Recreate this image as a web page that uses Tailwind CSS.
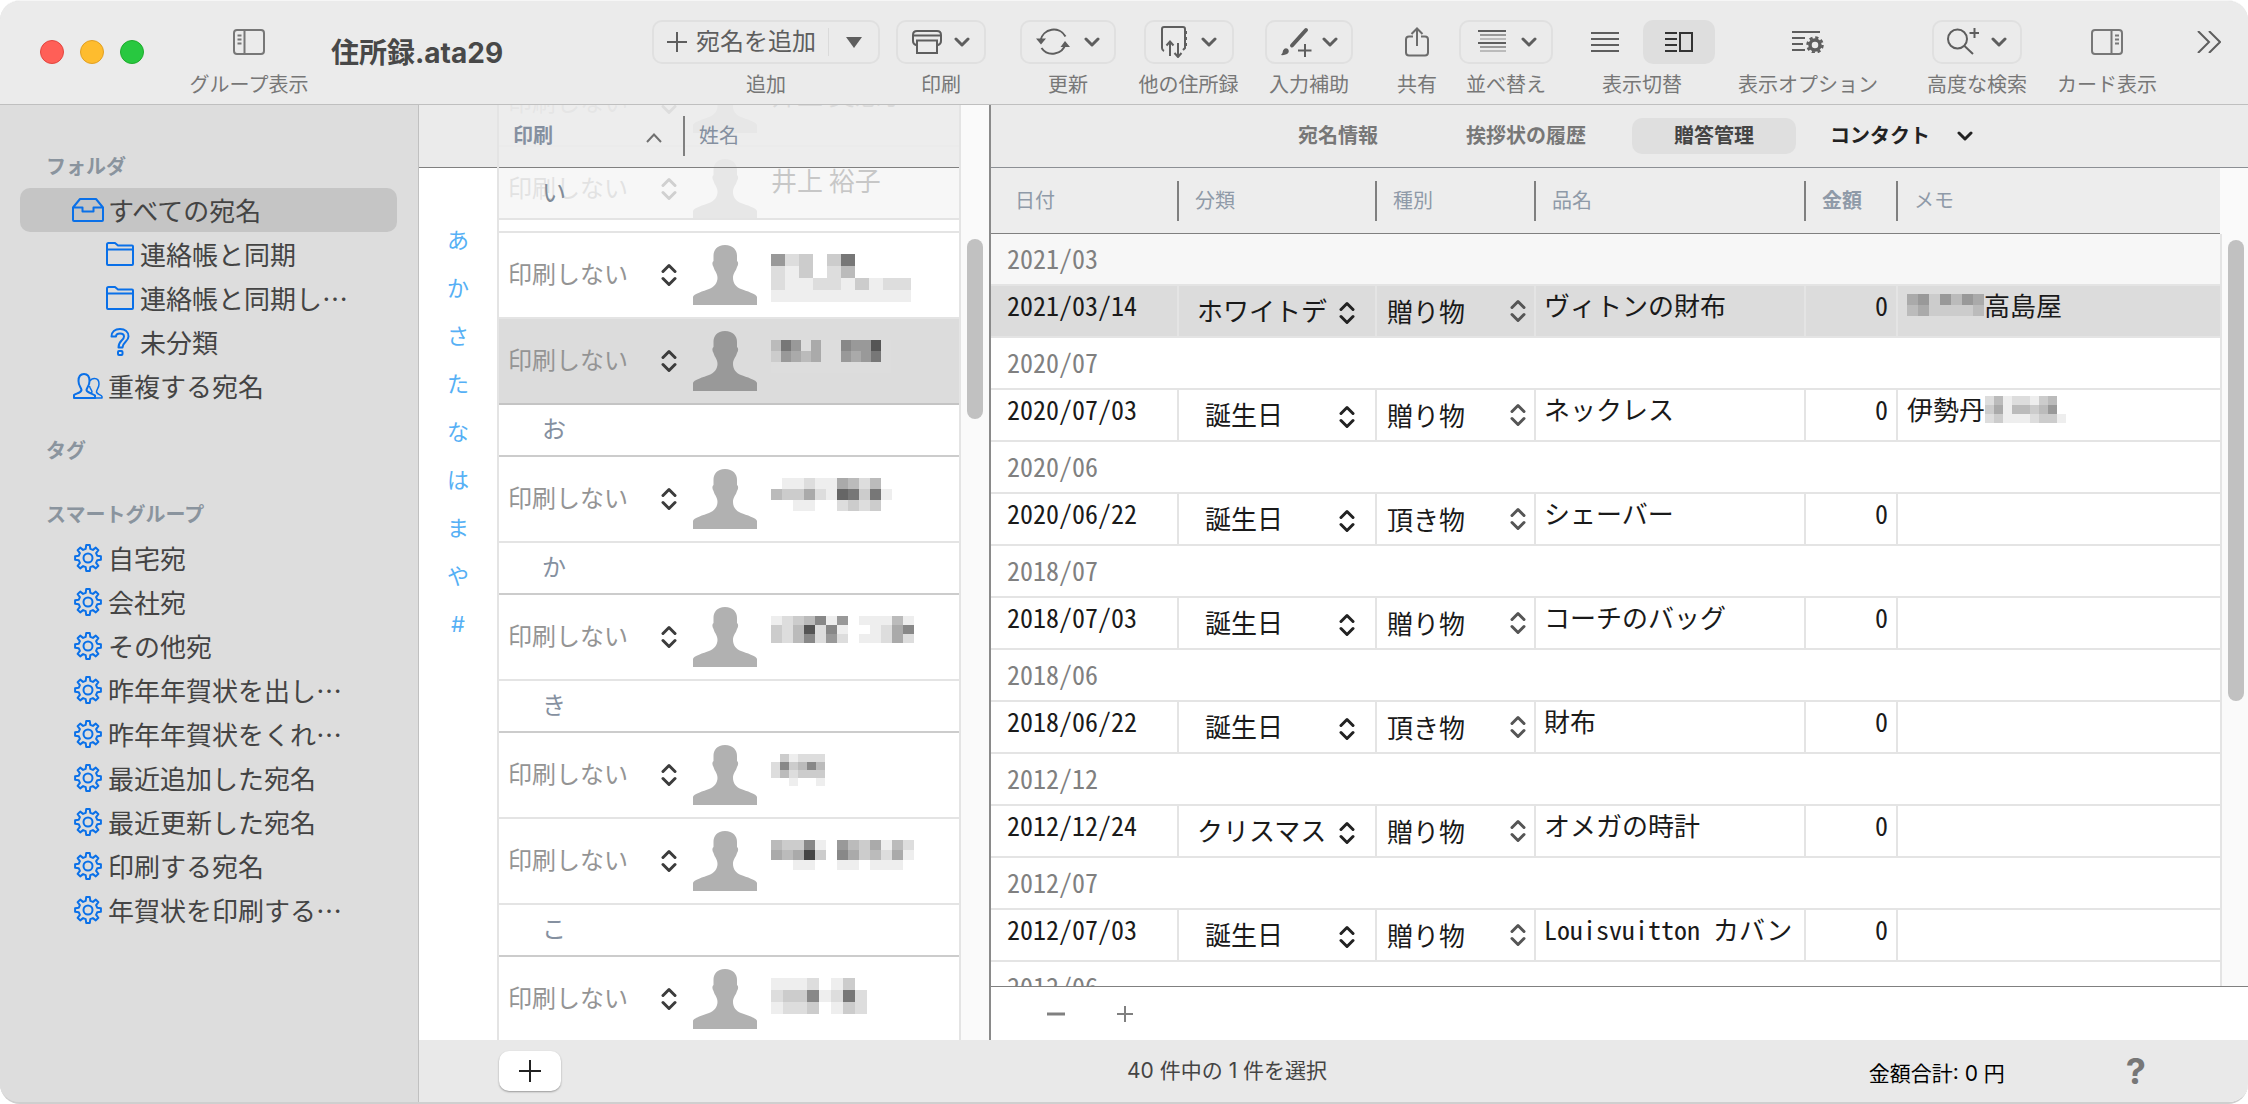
<!DOCTYPE html>
<html lang="ja">
<head>
<meta charset="utf-8">
<title>住所録.ata29</title>
<script src="https://cdn.jsdelivr.net/npm/@tailwindcss/browser@4"></script>
</head>
<body class="bg-white font-['Inter','Noto_Sans_CJK_JP',sans-serif] text-[#444]">
<svg class="hidden" aria-hidden="true">
  <symbol id="chev" viewBox="0 0 16 10"><path d="M2 2l6 6 6-6" fill="none" stroke="currentColor" stroke-width="3" stroke-linecap="round" stroke-linejoin="round"/></symbol>
  <symbol id="updown" viewBox="0 0 16 24"><path d="M2 8.500l6-6 6 6M2 15.500l6 6 6-6" fill="none" stroke="currentColor" stroke-width="3" stroke-linecap="round" stroke-linejoin="round"/></symbol>
  <symbol id="person" viewBox="0 0 64 60"><path fill="currentColor" d="M32 0C24 0 20.500 5 20.500 11V16C19 17 19 19.500 20.500 22C22 27 24.500 28 24.500 33C24.500 38 21 42 16 44C11 46 0 49 0 52V60H64V52C64 49 53 46 48 44C43 42 40 38 40 33C40 28 42.500 27 44 22C45.500 19.500 45.500 17 44 16V11C44 5 40 0 32 0Z"/></symbol>
  <symbol id="gear" viewBox="0 0 28 28"><path id="gearpath" fill="none" stroke="currentColor" stroke-width="2" stroke-linejoin="round"/><circle cx="14" cy="14" r="4.500" fill="none" stroke="currentColor" stroke-width="2"/></symbol>
  <symbol id="folder" viewBox="-2 -2 32 28"><path d="M1 2.500Q1 1 2.500 1H9l3 2.500H26Q27 3.500 27 4.500V22Q27 23 26 23H2Q1 23 1 22ZM1 7.500H27" fill="none" stroke="currentColor" stroke-width="2" stroke-linejoin="round"/></symbol>
  <symbol id="inbox" viewBox="0 0 32 24"><path d="M1 9.500L8 1H24L31 9.500V22Q31 23 30 23H2Q1 23 1 22ZM1 9.500H10.500V13.500H21.500V9.500H31" fill="none" stroke="currentColor" stroke-width="2" stroke-linejoin="round"/></symbol>
  <symbol id="question" viewBox="0 0 20 28"><path d="M1.500 8.500C1.500 4 5 1 10 1C15 1 18.500 4 18.500 8.500C18.500 13.500 12.500 14 12.500 19.500H8.500C8.500 12.500 14 12.500 14 8.500C14 6.500 12.500 5.500 10 5.500C7.500 5.500 6 6.500 6 8.500Z" fill="none" stroke="currentColor" stroke-width="2" stroke-linejoin="round"/><rect x="8" y="23" width="4.500" height="4" rx="1" fill="none" stroke="currentColor" stroke-width="2"/></symbol>
  <symbol id="people" viewBox="0 0 30 28"><path d="M1 26V23C3 21.500 8 21 8.500 18C8 15 5.500 14 5.500 9C5.500 4 8 2 11 2C14 2 16.500 4 16.500 9C16.500 14 14 15 13.500 18C14 21 20 21.500 22 23.500V26Z" fill="none" stroke="currentColor" stroke-width="2" stroke-linejoin="round"/><path d="M17 9C18 7 20 6.500 21.500 6.500C24 6.500 26 8.500 26 12C26 16 23.500 17.500 23.500 20C24 22.500 28 22.500 29 24.500V26H22M16.500 14C17 17 19 18 19 20L17.500 21.500" fill="none" stroke="currentColor" stroke-width="1.500" stroke-linejoin="round"/></symbol>
</svg>

<div class="flex h-screen flex-col overflow-hidden rounded-[20px] border-t border-b-2 border-t-[#f6f6f6] border-b-[#cfcfcf] bg-[#dddddd]">

  <!-- Toolbar -->
  <header class="flex h-[104px] shrink-0 items-start border-b border-[#bfbfbf] bg-[#ebebeb] text-[#5e5e5e]">
    <div class="ml-10 mt-[39px] flex gap-4">
      <button aria-label="閉じる" class="size-6 rounded-full border border-[#e2463f] bg-[#ff5f57]"></button>
      <button aria-label="しまう" class="size-6 rounded-full border border-[#e1a024] bg-[#febc2e]"></button>
      <button aria-label="拡大" class="size-6 rounded-full border border-[#1eac2c] bg-[#28c840]"></button>
    </div>
    <div class="ml-11 mt-[19px] flex w-[122px] flex-col items-center gap-[11px]">
      <button aria-label="グループ表示" class="flex h-11 items-center"><svg class="h-[26px] w-8" viewBox="0 0 32 26" fill="none" stroke="#777" stroke-width="2"><rect x="1" y="1" width="30" height="24" rx="3"/><path d="M11.500 1V25M4.500 6.500H8.500M4.500 10.500H8.500M4.500 14.500H8.500"/></svg></button>
      <span class="text-xl leading-5 text-[#777] whitespace-nowrap">グループ表示</span>
    </div>
    <h1 class="ml-[21px] mt-9 text-[28px] font-bold leading-8 text-[#484848] whitespace-nowrap">住所録.ata29</h1>
    <div class="flex-1"></div>

    <div class="mt-[19px] flex w-[228px] flex-col items-center gap-[11px]">
      <div class="flex h-11 w-full items-center rounded-[10px] border-2 border-[#e0e0e0]">
        <button class="flex h-full items-center text-2xl leading-8 whitespace-nowrap"><svg class="ml-3 mr-2 size-[22px]" viewBox="0 0 22 22" stroke="currentColor" stroke-width="2"><path d="M11 1V21M1 11H21"/></svg>宛名を追加</button>
        <span class="ml-3 h-7 w-px bg-[#dadada]"></span>
        <button aria-label="追加メニュー" class="flex h-full flex-1 items-center justify-center"><svg class="h-[11px] w-4" viewBox="0 0 16 11"><path d="M0 0H16L8 11Z" fill="currentColor"/></svg></button>
      </div>
      <span class="text-xl leading-5 text-[#777]">追加</span>
    </div>
    <div class="ml-4 mt-[19px] flex w-[90px] flex-col items-center gap-[11px]">
      <button aria-label="印刷" class="flex h-11 w-[90px] items-center justify-center gap-3 rounded-[10px] border-2 border-[#e0e0e0]">
        <svg class="h-6 w-[30px]" viewBox="0 0 30 24" fill="none" stroke="currentColor" stroke-width="2"><path d="M5 15H4Q1 14 1 11V5Q1 1 5 1H25Q29 1 29 5V11Q29 14 26 15H25M2 5.500H28"/><rect x="5" y="10.500" width="20" height="12.500"/></svg>
        <svg class="h-[10px] w-4"><use href="#chev"/></svg></button>
      <span class="text-xl leading-5 text-[#777]">印刷</span>
    </div>
    <div class="ml-[34px] mt-[19px] flex w-24 flex-col items-center gap-[11px]">
      <button aria-label="更新" class="flex h-11 w-24 items-center justify-center gap-[14px] rounded-[10px] border-2 border-[#e0e0e0]">
        <svg class="h-[30px] w-[34px]" viewBox="0 0 34 30" fill="none" stroke="currentColor" stroke-width="2"><path d="M29.500 9.500A13.500 13.500 0 0 0 4.500 13.500M5.500 21A13.500 13.500 0 0 0 29.500 17"/><path d="M0 11.500H10L5 17.500ZM24.500 20H34L29 14Z" fill="currentColor" stroke="none"/></svg>
        <svg class="h-[10px] w-4"><use href="#chev"/></svg></button>
      <span class="text-xl leading-5 text-[#777]">更新</span>
    </div>
    <div class="ml-[22px] mt-[19px] flex w-[101px] flex-col items-center gap-[11px]">
      <button aria-label="他の住所録" class="flex h-11 w-[90px] items-center justify-center gap-[14px] rounded-[10px] border-2 border-[#e0e0e0]">
        <svg class="h-8 w-[26px]" viewBox="0 0 26 32" fill="none" stroke="currentColor" stroke-width="2"><path d="M3 25Q1 24 1 22V3Q1 1 3 1H22Q24 1 24 3V22L22 24"/><path d="M25 5V8M25 11V14M25 17V20" stroke-width="3"/><path d="M9 30V16M5.500 19.500L9 15.500L12.500 19.500M17 17V31M13.500 27L17 31L20.500 27"/></svg>
        <svg class="h-[10px] w-4"><use href="#chev"/></svg></button>
      <span class="text-xl leading-5 text-[#777] whitespace-nowrap">他の住所録</span>
    </div>
    <div class="ml-[26px] mt-[19px] flex w-[88px] flex-col items-center gap-[11px]">
      <button aria-label="入力補助" class="flex h-11 w-[88px] items-center justify-center gap-[10px] rounded-[10px] border-2 border-[#e0e0e0]">
        <svg class="h-[30px] w-[31px]" viewBox="0 0 31 30" fill="none" stroke="currentColor"><path d="M11 18.500L25 3" stroke-width="4" stroke-linecap="round"/><path d="M0 28Q2 26 2 23.500Q4 20 7 22Q9 25 6 27Q3 28.500 0 28Z" fill="currentColor" stroke="none"/><path d="M24 17V30M17 23.500H30.500" stroke-width="2"/></svg>
        <svg class="h-[10px] w-4"><use href="#chev"/></svg></button>
      <span class="text-xl leading-5 text-[#777] whitespace-nowrap">入力補助</span>
    </div>
    <div class="ml-11 mt-[19px] flex w-10 flex-col items-center gap-[11px]">
      <button aria-label="共有" class="flex h-11 items-center"><svg class="h-[30px] w-6" viewBox="0 0 24 30" fill="none" stroke="#6c6c6c" stroke-width="2"><path d="M8 9.500H4Q1 9.500 1 12.500V25.500Q1 28.500 4 28.500H20Q23 28.500 23 25.500V12.500Q23 9.500 20 9.500H16M12 19V2M6.500 7L12 1.500L17.500 7"/></svg></button>
      <span class="text-xl leading-5 text-[#777]">共有</span>
    </div>
    <div class="ml-[22px] mt-[19px] flex w-[94px] flex-col items-center gap-[11px]">
      <button aria-label="並べ替え" class="flex h-11 w-[94px] items-center justify-center gap-[15px] rounded-[10px] border-2 border-[#e0e0e0] pl-[2px]">
        <svg class="h-6 w-7" viewBox="0 0 28 24" stroke="#5e5e5e" stroke-width="2"><path d="M0 1H28M0 13H28"/><path d="M2 5H28M2 17H28" stroke="#999"/><path d="M2 9H28M2 21H28" stroke="#bbb"/></svg>
        <svg class="h-[10px] w-4"><use href="#chev"/></svg></button>
      <span class="text-xl leading-5 text-[#777] whitespace-nowrap">並べ替え</span>
    </div>
    <div class="ml-4 mt-[19px] flex w-[146px] flex-col items-center gap-[11px]">
      <div class="flex gap-[2px]">
        <button aria-label="リスト表示" class="flex h-11 w-[72px] items-center justify-center rounded-[10px]"><svg class="h-5 w-7" viewBox="0 0 28 20" stroke="currentColor" stroke-width="2"><path d="M0 1H28M0 7H28M0 13H28M0 19H28"/></svg></button>
        <button aria-label="分割表示" class="flex h-11 w-[72px] items-center justify-center rounded-[10px] bg-[#dedede] text-[#333]"><svg class="h-5 w-7" viewBox="0 0 28 20" fill="none" stroke="currentColor" stroke-width="2"><path d="M0 1H12M0 7H12M0 13H12M0 19H12"/><rect x="15" y="1" width="12" height="18"/></svg></button>
      </div>
      <span class="text-xl leading-5 text-[#777]">表示切替</span>
    </div>
    <div class="ml-[23px] mt-[19px] flex w-[140px] flex-col items-center gap-[11px]">
      <button aria-label="表示オプション" class="flex h-11 items-center"><svg class="h-[22px] w-8" viewBox="0 0 32 22" fill="none" stroke="currentColor" stroke-width="2"><path d="M0 1H28M0 7H13M0 13H11M0 19H13"/><circle cx="23" cy="14" r="5" stroke-width="3.500"/><circle cx="23" cy="14" r="7.500" stroke-width="2.500" stroke-dasharray="3.200 2.690"/></svg></button>
      <span class="text-xl leading-5 text-[#777] whitespace-nowrap">表示オプション</span>
    </div>
    <div class="ml-[49px] mt-[19px] flex w-[100px] flex-col items-center gap-[11px]">
      <button aria-label="高度な検索" class="flex h-11 w-[90px] items-center justify-center gap-3 rounded-[10px] border-2 border-[#e0e0e0]">
        <svg class="h-[28px] w-8" viewBox="0 0 32 28" fill="none" stroke="currentColor" stroke-width="2"><circle cx="10.500" cy="11" r="9.500"/><path d="M17 17.500L26 26M27.500 0V10M22.500 5H32"/></svg>
        <svg class="h-[10px] w-4"><use href="#chev"/></svg></button>
      <span class="text-xl leading-5 text-[#777] whitespace-nowrap">高度な検索</span>
    </div>
    <div class="ml-[30px] mt-[19px] flex w-[100px] flex-col items-center gap-[11px]">
      <button aria-label="カード表示" class="flex h-11 items-center"><svg class="h-[26px] w-8" viewBox="0 0 32 26" fill="none" stroke="#777" stroke-width="2"><rect x="1" y="1" width="30" height="24" rx="3"/><path d="M20.500 1V25M24 6.500H28M24 10.500H28M24 14.500H28"/></svg></button>
      <span class="text-xl leading-5 text-[#777] whitespace-nowrap">カード表示</span>
    </div>
    <button aria-label="その他" class="ml-10 mr-[27px] mt-[19px] flex h-11 items-center"><svg class="h-[22px] w-6" viewBox="0 0 24 22" fill="none" stroke="currentColor" stroke-width="2"><path d="M1 0L12 11L1 22M12 0L23 11L12 22"/></svg></button>
  </header>

  <div class="flex min-h-0 flex-1">
    <!-- Groups -->
    <nav class="w-[419px] shrink-0 overflow-hidden border-r border-[#c0c0c0] bg-[#dddddd] pl-5 pr-[21px] pt-[39px] font-['Noto_Sans_CJK_JP',sans-serif] text-[26px]">
      <h2 class="flex h-11 items-center pl-[26px] text-xl font-bold text-[#8a949e]">フォルダ</h2>
      <ul id="folders"></ul>
      <h2 class="mt-5 flex h-11 items-center pl-[26px] text-xl font-bold text-[#8a949e]">タグ</h2>
      <h2 class="mt-5 flex h-11 items-center pl-[26px] text-xl font-bold text-[#8a949e]">スマートグループ</h2>
      <ul id="smart"></ul>
    </nav>

    <div class="flex min-w-0 flex-1 flex-col bg-white">
      <div class="flex min-h-0 flex-1">
        <!-- Kana index -->
        <div class="w-[78px] shrink-0">
          <div class="h-[63px] border-b border-[#808080] bg-[#ebebeb]"></div>
          <div id="index" class="flex flex-col items-center pt-12 text-[22px] text-[#56b0f5]"></div>
        </div>

        <!-- Address list -->
        <section class="relative w-[464px] shrink-0 overflow-hidden border-x-2 border-[#e4e4e4]">
          <table class="-mt-11 w-full table-fixed border-separate border-spacing-0">
            <colgroup><col class="w-[188px]"><col></colgroup>
            <tbody id="people-rows"></tbody>
          </table>
          <div class="absolute inset-x-0 top-0 flex h-[63px] items-center border-b border-[#808080] bg-[#ececec]/92 text-xl leading-6 text-[#8590a0]">
            <button class="flex w-[184px] items-center justify-between pl-[14px] pr-[21px] font-bold"><span>印刷</span><svg class="mt-1 h-[10px] w-4 text-[#707070]" viewBox="0 0 16 10" fill="none" stroke="currentColor" stroke-width="2"><path d="M1 9L8 1.500L15 9"/></svg></button>
            <span class="h-10 w-[2px] bg-[#808080]"></span>
            <button class="pl-[14px]">姓名</button>
          </div>
          <div class="absolute inset-x-0 top-[63px] flex h-[52px] items-center border-b-2 border-[#e4e4e4] bg-[#f5f5f5]/80 pl-[43px] text-2xl text-[#808b98]">い</div>
        </section>
        <div class="w-7 shrink-0 bg-[#fafafa]">
          <div class="ml-[6px] mt-[134px] h-[180px] w-4 rounded-full bg-[#c1c1c1]"></div>
        </div>

        <!-- Details -->
        <section class="flex min-w-0 flex-1 flex-col border-l-2 border-[#8a8a8a]">
          <div class="flex h-[63px] shrink-0 items-center justify-center border-b border-[#8c8f94] bg-[#ebebeb] pr-[10px] text-xl font-bold text-[#777]">
            <button class="w-[164px]">宛名情報</button>
            <button class="ml-6 w-[164px]">挨拶状の履歴</button>
            <button class="ml-6 h-9 w-[164px] rounded-[10px] bg-[#dfdfdf] text-[#444]">贈答管理</button>
            <button class="ml-[34px] flex items-center gap-[27px] text-[#222]">コンタクト<svg class="h-[10px] w-4"><use href="#chev"/></svg></button>
          </div>
          <div class="flex min-h-0 flex-1">
            <div class="min-w-0 flex-1 overflow-hidden">
              <table class="w-full table-fixed border-separate border-spacing-0 text-left">
                <colgroup><col class="w-[188px]"><col class="w-[198px]"><col class="w-[159px]"><col class="w-[270px]"><col class="w-[92px]"><col></colgroup>
                <thead class="text-xl leading-10 text-[#8f9aa8]">
                  <tr class="h-[66px] bg-[#ededed]">
                    <th class="border-b border-[#808080] p-0 font-normal"><div class="border-r-2 border-[#808080] pl-6">日付</div></th>
                    <th class="border-b border-[#808080] p-0 font-normal"><div class="border-r-2 border-[#808080] pl-4">分類</div></th>
                    <th class="border-b border-[#808080] p-0 font-normal"><div class="border-r-2 border-[#808080] pl-4">種別</div></th>
                    <th class="border-b border-[#808080] p-0 font-normal"><div class="border-r-2 border-[#808080] pl-4">品名</div></th>
                    <th class="border-b border-[#808080] p-0 font-bold"><div class="border-r-2 border-[#808080] pl-4">金額</div></th>
                    <th class="border-b border-[#808080] p-0 font-normal"><div class="pl-4">メモ</div></th>
                  </tr>
                </thead>
                <tbody id="gifts" class="font-['Noto_Sans_CJK_JP',sans-serif] text-[26px] leading-[38px] [font-feature-settings:'hwid']"></tbody>
              </table>
            </div>
            <div class="w-7 shrink-0 bg-[#fafafa] pt-[66px]">
              <div class="h-full border-l-2 border-[#e4e4e4] pl-[6px] pt-[6px]"><div class="h-[461px] w-4 rounded-full bg-[#c1c1c1]"></div></div>
            </div>
          </div>
          <div class="flex h-[54px] shrink-0 items-center border-t border-[#808080] pl-14 text-[#808080]">
            <button aria-label="削除"><svg class="h-4 w-[18px]" viewBox="0 0 18 16"><path d="M0 8H18" stroke="currentColor" stroke-width="3"/></svg></button>
            <button aria-label="追加" class="ml-[52px]"><svg class="size-4" viewBox="0 0 16 16"><path d="M0 8H16M8 0V16" stroke="currentColor" stroke-width="2"/></svg></button>
          </div>
        </section>
      </div>

      <!-- Status bar -->
      <footer class="flex h-[62px] shrink-0 items-center bg-[#e9e9e9] text-[21px]">
        <div class="w-[572px] shrink-0 pl-20"><button aria-label="宛名を追加" class="flex h-10 w-[62px] items-center justify-center rounded-[10px] bg-white text-[#222] shadow-[0_1px_2px_rgba(0,0,0,0.35)]"><svg class="size-[22px]" viewBox="0 0 22 22"><path d="M0 11H22M11 0V22" stroke="currentColor" stroke-width="2"/></svg></button></div>
        <p class="flex-1 pl-[136px] whitespace-nowrap">40 件中の 1 件を選択</p>
        <p class="mr-[121px] pt-[6px] text-black whitespace-nowrap">金額合計: 0 円</p>
        <button aria-label="ヘルプ" class="mr-[102px] text-4xl font-bold text-[#777]">?</button>
      </footer>
    </div>
  </div>
</div>

<script>
// Gear outline: eight rounded teeth around a 28px box
const pts = [];
for (let i = 0; i < 8; i++) for (const [da, r] of [[-14, 9.5], [-8, 13], [8, 13], [14, 9.5]]) {
  const a = (i * 45 + da) * Math.PI / 180;
  pts.push((14 + r * Math.sin(a)).toFixed(1) + ' ' + (14 - r * Math.cos(a)).toFixed(1));
}
document.getElementById('gearpath').setAttribute('d', 'M' + pts.join('L') + 'Z');

// Masked text: one hex digit of grey per tile
const mosaic = (rows, w, h) => {
  const n = Math.max(...rows.map(r => r.length));
  return `<svg class="inline-block shrink-0 align-top" width="${n * w}" height="${rows.length * h}" shape-rendering="crispEdges">` +
    rows.map((r, y) => [...r].map((c, x) => c === '.' ? '' : `<rect x="${x * w}" y="${y * h}" width="${w}" height="${h}" fill="#${c}${c}${c}"/>`).join('')).join('') + '</svg>';
};

const folders = [['inbox', 'すべての宛名', 0], ['folder', '連絡帳と同期', 1], ['folder', '連絡帳と同期し…', 1], ['question', '未分類', 1], ['people', '重複する宛名', 0]];
const smart = ['自宅宛', '会社宛', 'その他宛', '昨年年賀状を出し…', '昨年年賀状をくれ…', '最近追加した宛名', '最近更新した宛名', '印刷する宛名', '年賀状を印刷する…'];
document.getElementById('folders').innerHTML = folders.map(([icon, name, sub], i) =>
  `<li><a href="#" class="flex h-11 items-center whitespace-nowrap rounded-[10px] ${i === 0 ? 'bg-[#c5c5c5]' : ''} ${sub ? 'pl-[84px]' : 'pl-[52px]'}"><svg class="mr-1 h-7 w-8 text-[#0a70e8]"><use href="#${icon}"/></svg><span class="pb-[2px]">${name}</span></a></li>`).join('');
document.getElementById('smart').innerHTML = smart.map(name =>
  `<li><a href="#" class="flex h-11 items-center whitespace-nowrap pl-[52px]"><svg class="mr-1 h-7 w-8 text-[#0a70e8]"><use href="#gear"/></svg><span class="pb-[2px]">${name}</span></a></li>`).join('');
document.getElementById('index').innerHTML = [...'あかさたなはまや#'].map(c => `<a href="#" class="flex h-12 items-center">${c}</a>`).join('');

const people = [
  { name: '井上 美恵子' }, { name: '井上 裕子' },
  { tiles: [['9dcfc7f', 'decfdb', 'deeddeceddff', 'eeeeeeeeee'], 14, 12] },
  { sel: 1, tiles: [['b79dadd8995d', 'c9abadd9a97d', 'dddddddddddd'], 10, 11] },
  'お', { tiles: [['.eedeeabdbf', 'bccade67c7e', '.feeffdcdcf'], 11, 11] },
  'か', { tiles: [['edcb8e9feeebe', 'cdb5d8effeda8', 'cdb8d9dfeedad', 'fffffffffffff'], 11, 9] },
  'き', { tiles: [['fceddd', 'd8cb8bf', 'dbdcccf', 'ffeffe'], 9, 8] },
  { tiles: [['bcc8ef9bcaebd', 'aba4cf8acbdae', 'ffeeffeefeeef'], 11, 10] },
  'こ', { tiles: [['eeedfecf', 'dcc8ed7d', 'eddcfecd'], 12, 12] },
];
document.getElementById('people-rows').innerHTML = people.map((p, i) => {
  if (typeof p === 'string') return `<tr><th colspan="2" class="h-[52px] border-b-2 border-[#cccccc] p-0 pl-[43px] text-left text-2xl font-normal leading-10 text-[#8590a0]">${p}</th></tr>`;
  const line = p.sel ? 'border-[#c4c4c4]' : 'border-[#e4e4e4]';
  return `<tr class="${p.sel ? 'bg-[#dcdcdc]' : ''}">
    <td class="h-[86px] border-b-2 p-0 pl-[9px] ${line}"><div class="flex items-center"><select aria-label="印刷" id="print-${i}" class="w-[153px] appearance-none text-2xl text-[#949494]"><option>印刷しない</option></select><svg class="h-6 w-4 text-[#3c3c3c]"><use href="#updown"/></svg></div></td>
    <td class="h-[86px] border-b-2 p-0 pl-[6px] ${line}"><div class="flex h-[60px] items-start gap-[14px]"><svg class="h-[60px] w-16 shrink-0 ${p.sel ? 'text-[#999]' : 'text-[#b1b1b1]'}"><use href="#person"/></svg><span class="whitespace-nowrap font-['Noto_Sans_CJK_JP',sans-serif] text-[26px] leading-8 text-[#111] ${p.name ? 'pt-[5px]' : 'pt-[9px]'}">${p.name || mosaic(...p.tiles)}</span></div></td></tr>`;
}).join('');

const gifts = [
  ['2021/03', '2021/03/14', 'ホワイトデ', '贈り物', 'ヴィトンの財布', mosaic(['a9c9b9a', 'baccccb'], 11, 11) + '高島屋'],
  ['2020/07', '2020/07/03', '誕生日', '贈り物', 'ネックレス', '伊勢丹' + mosaic(['dbeddecbf', 'caebbcb9f', 'dceeedcce'], 9, 9)],
  ['2020/06', '2020/06/22', '誕生日', '頂き物', 'シェーバー', ''],
  ['2018/07', '2018/07/03', '誕生日', '贈り物', 'コーチのバッグ', ''],
  ['2018/06', '2018/06/22', '誕生日', '頂き物', '財布', ''],
  ['2012/12', '2012/12/24', 'クリスマス', '贈り物', 'オメガの時計', ''],
  ['2012/07', '2012/07/03', '誕生日', '贈り物', 'Louisvuitton カバン', ''],
  ['2012/06'],
];
const cell = 'h-[52px] border-b-2 border-r-2 border-[#e4e4e4] p-0 whitespace-nowrap';
document.getElementById('gifts').innerHTML = gifts.map(([month, date, kind, type, item, memo], i) =>
  `<tr class="${i === 0 ? 'bg-[#f7f7f7]' : ''}"><th colspan="6" class="h-[52px] border-b-2 border-[#e4e4e4] p-0 pb-[2px] pl-4 font-normal text-[#808080]">${month}</th></tr>` +
  (date ? `<tr class="text-[#1a1a1a] ${i === 0 ? 'bg-[#dcdcdc]' : ''}">
    <td class="${cell} pb-3 pl-4">${date}</td>
    <td class="${cell} ${kind.length > 3 ? 'pl-[18px]' : 'pl-[26px]'}"><div class="flex items-center"><select aria-label="分類" class="mb-1 h-9 appearance-none ${kind.length > 3 ? 'w-[142px]' : 'w-[134px]'}"><option>${kind}</option></select><svg class="mt-1 h-6 w-4 text-[#222]"><use href="#updown"/></svg></div></td>
    <td class="${cell} pl-[10px]"><div class="flex items-center"><select aria-label="種別" class="h-10 w-[123px] appearance-none"><option>${type}</option></select><svg class="h-6 w-4 text-[#555]"><use href="#updown"/></svg></div></td>
    <td class="${cell} pb-3 pl-2">${item}</td>
    <td class="${cell} pb-3 pr-2 text-right">0</td>
    <td class="h-[52px] border-b-2 border-[#e4e4e4] p-0 pb-3 pl-[9px]"><div class="flex items-center">${memo}</div></td></tr>` : '')).join('');
</script>
</body>
</html>
